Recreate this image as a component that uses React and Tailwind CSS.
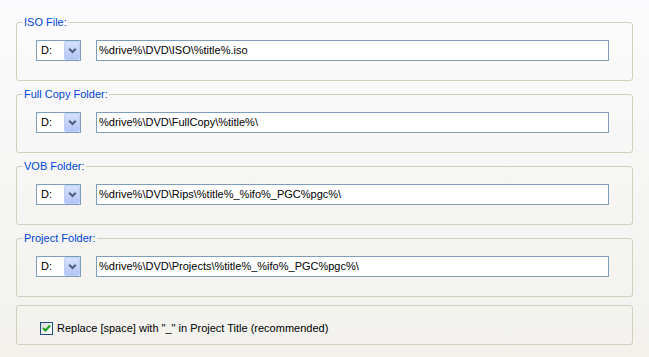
const FONT = { fontFamily: '"Liberation Sans", Arial, sans-serif' }

const folders = [
  { label: 'ISO File:', path: '%drive%\\DVD\\ISO\\%title%.iso' },
  { label: 'Full Copy Folder:', path: '%drive%\\DVD\\FullCopy\\%title%\\' },
  { label: 'VOB Folder:', path: '%drive%\\DVD\\Rips\\%title%_%ifo%_PGC%pgc%\\' },
  { label: 'Project Folder:', path: '%drive%\\DVD\\Projects\\%title%_%ifo%_PGC%pgc%\\' },
]

function DriveCombo() {
  return (
    <div className="flex h-[21px] w-[45px] shrink-0 items-stretch border border-[#7f9db9] bg-white">
      <span className="flex-1 pl-[4px] text-[11px] leading-[19px] text-black">D:</span>
      <div className="flex w-[16px] items-center justify-center rounded-[2px] border border-[#bccdf7] bg-gradient-to-b from-[#d6e2fd] to-[#b2c6f6]">
        <svg width="9" height="7" viewBox="0 0 9 7">
          <polyline points="1.2,1.8 4.5,5 7.8,1.8" fill="none" stroke="#4d6185" strokeWidth="2.2" />
        </svg>
      </div>
    </div>
  )
}

function FolderGroup({ label, path }) {
  return (
    <fieldset className="mb-[7px] w-[617px] rounded-[3px] border border-[#d0d0bf] pl-[19px] pr-[23px] pt-[12px] pb-[19px]">
      <legend className="ml-[-13px] px-[1px] text-[11px] leading-[12px] text-[#0046d5]">{label}</legend>
      <div className="flex items-center">
        <DriveCombo />
        <div className="ml-[15px] h-[21px] flex-1 border border-[#7f9db9] bg-white pl-[2px] text-[11px] leading-[19px] text-black">
          {path}
        </div>
      </div>
    </fieldset>
  )
}

export default function App() {
  return (
    <div
      className="h-[357px] w-[649px] overflow-hidden bg-gradient-to-b from-[#fbfbfd] to-[#f2f1ec] pl-[16px] pt-[16px]"
      style={FONT}
    >
      {folders.map((f) => (
        <FolderGroup key={f.label} {...f} />
      ))}
      <div className="mt-[8px] flex h-[40px] w-[617px] items-start rounded-[3px] border border-[#d0d0bf] pl-[23px] pt-[16px]">
        <div className="flex items-center">
          <div className="flex h-[13px] w-[13px] items-center justify-center border border-[#1c5180] bg-gradient-to-br from-[#dcdcd7] to-white">
            <svg width="9" height="9" viewBox="0 0 9 9">
              <polyline points="1,4 3.5,6.5 8,1.5" fill="none" stroke="#21a121" strokeWidth="2.2" />
            </svg>
          </div>
          <span className="ml-[4px] text-[11px] leading-[13px] text-black">
            Replace [space] with "_" in Project Title (recommended)
          </span>
        </div>
      </div>
    </div>
  )
}
